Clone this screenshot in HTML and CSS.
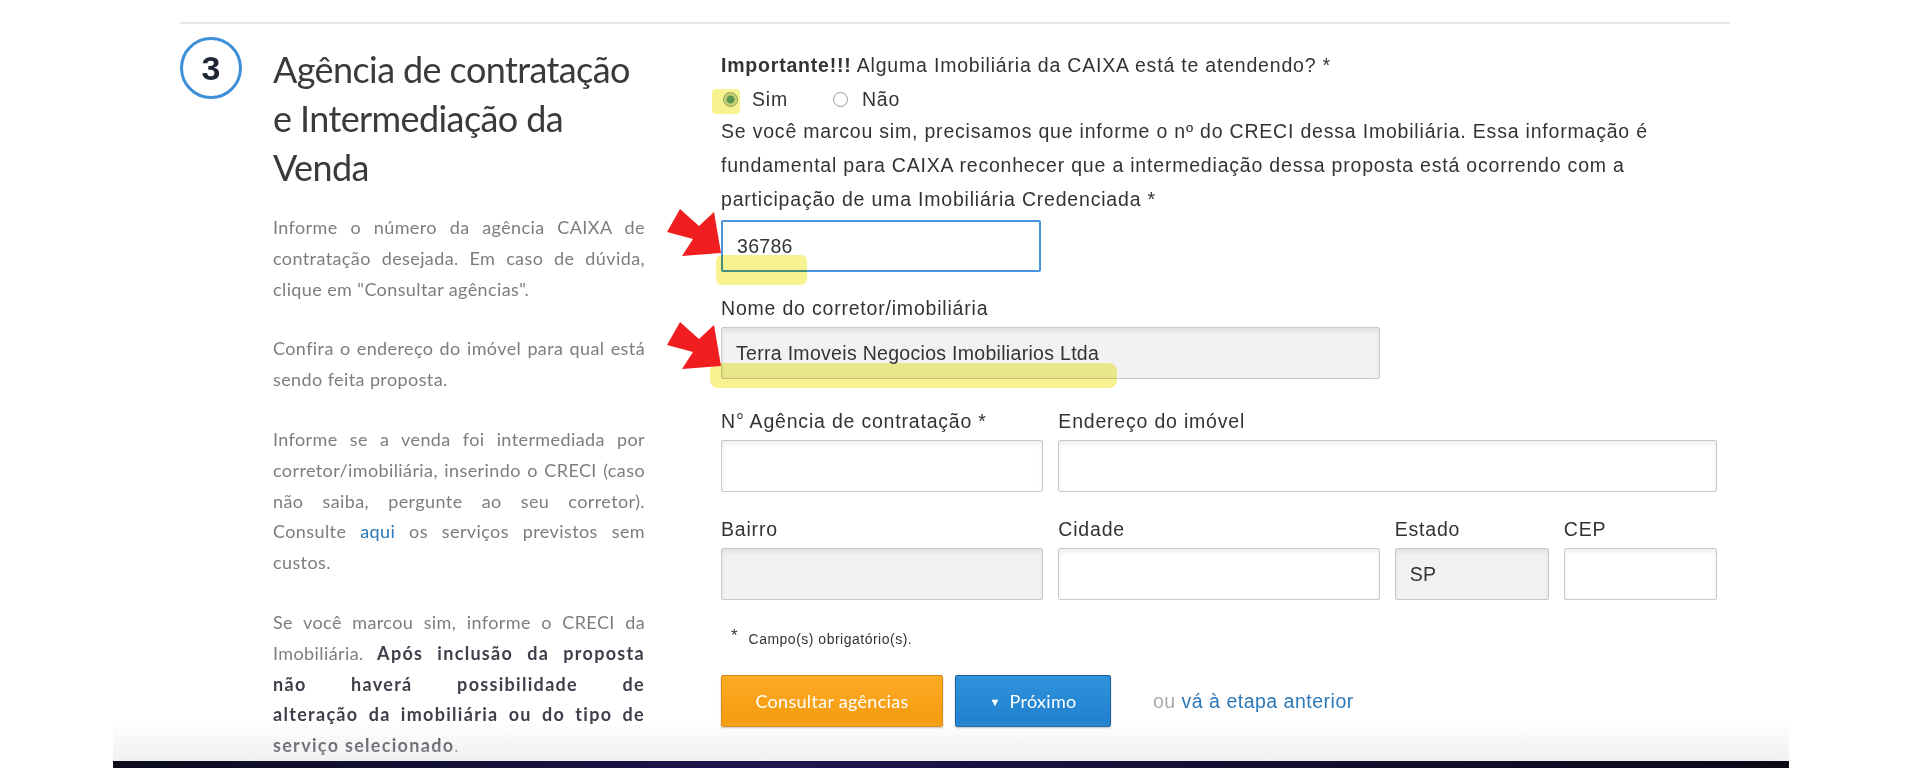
FILE: index.html
```html
<!DOCTYPE html>
<html lang="pt-BR">

<head>
    <meta charset="UTF-8">
    <meta name="viewport" content="width=device-width, initial-scale=1.0">
    <title>Agência de contratação e Intermediação da Venda</title>
    <link rel="stylesheet" href="styles.css">
</head>

<body>
    <div class="page">
        <section class="step">

            <div class="step-aside">
                <div class="step-head">
                    <span class="step-num">3</span>
                    <h2>Agência de contratação e Intermediação da Venda</h2>
                </div>
                <div class="step-help">
                    <p>Informe o número da agência CAIXA de contratação desejada. Em caso de dúvida, clique em "Consultar agências".</p>
                    <p>Confira o endereço do imóvel para qual está sendo feita proposta.</p>
                    <p>Informe se a venda foi intermediada por corretor/imobiliária, inserindo o CRECI (caso não saiba, pergunte ao seu corretor). Consulte <a href="#">aqui</a> os serviços previstos sem custos.</p>
                    <p>Se você marcou sim, informe o CRECI da Imobiliária. <b>Após inclusão da proposta <span class="jline">não haverá possibilidade de</span> alteração da imobiliária ou do tipo de serviço selecionado</b>.</p>
                </div>
            </div>

            <form class="step-form" onsubmit="event.preventDefault();">
                <p class="question"><b>Importante!!!</b> Alguma Imobiliária da CAIXA está te atendendo? *</p>
                <div class="radios">
                    <label><input type="radio" name="imob" checked> Sim</label>
                    <label><input type="radio" name="imob"> Não</label>
                </div>
                <p class="creci-info">Se você marcou sim, precisamos que informe o nº do CRECI dessa Imobiliária. Essa informação é fundamental para CAIXA reconhecer que a intermediação dessa proposta está ocorrendo com a participação de uma Imobiliária Credenciada *</p>

                <div class="fields">
                    <div class="field full">
                        <input class="creci" type="text" value="36786">
                    </div>

                    <div class="field full">
                        <label>Nome do corretor/imobiliária</label>
                        <input class="readonly nome" type="text" value="Terra Imoveis Negocios Imobiliarios Ltda" readonly>
                    </div>

                    <div class="field">
                        <label>N° Agência de contratação *</label>
                        <input type="text">
                    </div>
                    <div class="field wide">
                        <label>Endereço do imóvel</label>
                        <input type="text">
                    </div>

                    <div class="field">
                        <label>Bairro</label>
                        <input class="readonly" type="text" readonly>
                    </div>
                    <div class="field">
                        <label>Cidade</label>
                        <input type="text">
                    </div>
                    <div class="field">
                        <label>Estado</label>
                        <input class="readonly" type="text" value="SP" readonly>
                    </div>
                    <div class="field">
                        <label>CEP</label>
                        <input type="text">
                    </div>
                </div>

                <p class="required"><span>*</span> Campo(s) obrigatório(s).</p>

                <div class="actions">
                    <button type="button" class="btn btn-orange">Consultar agências</button>
                    <button type="submit" class="btn btn-blue"><span class="caret">▼</span> Próximo</button>
                    <span class="back">ou <a href="#">vá à etapa anterior</a></span>
                </div>
            </form>

        </section>
    </div>

    <!-- marcações feitas por cima da captura -->
    <svg class="marks" width="1920" height="768" viewBox="0 0 1920 768">
        <rect class="hl" x="712" y="89" width="28" height="25" rx="4"/>
        <rect class="hl" x="716" y="255" width="91" height="30" rx="6"/>
        <rect class="hl" x="710" y="363" width="407" height="25" rx="8"/>
        <polygon class="arrow" points="680,209 699,226 714,212 721,253 682,256 693,239 667,232"/>
        <polygon class="arrow" points="680,322 699,339 714,325 721,366 682,369 693,352 667,345"/>
    </svg>

    <div class="dock"></div>
</body>

</html>
```

FILE: styles.css
```css
body {
    margin: 0;
    padding-top: 22px;
    height: 746px;
    overflow: hidden;
    background: #fff;
    font-family: "Liberation Sans", Arial, sans-serif;
    color: #333;
}

.page {
    width: 1550px;
    margin-left: 180px;
    border-top: 2px solid #e6e6e6;
}

.step {
    display: flex;
}

/* coluna da esquerda */
.step-aside {
    width: 464px;
    flex: none;
}

.step-head {
    display: flex;
    align-items: flex-start;
    gap: 31px;
}

.step-num {
    flex: none;
    width: 56px;
    height: 56px;
    margin-top: 13px;
    border: 3px solid #3d8fd8;
    border-radius: 50%;
    display: flex;
    align-items: center;
    justify-content: center;
    font-family: "Liberation Sans", Arial, sans-serif;
    font-weight: bold;
    font-size: 34px;
    color: #1e2636;
}

.step-head h2 {
    margin: 21px 0 0;
    font-family: Lato, sans-serif;
    font-weight: 400;
    font-size: 36px;
    letter-spacing: -0.6px;
    line-height: 49px;
    color: #3a3a3a;
}

.step-help {
    margin: 20px 0 0 93px;
    width: 372px;
}

.step-help p {
    margin: 0 0 29px;
    font-family: Lato, sans-serif;
    font-size: 18px;
    letter-spacing: 0.4px;
    line-height: 30.8px;
    text-align: justify;
    color: #7d7d7d;
}

.step-help a {
    color: #2a78b8;
    text-decoration: none;
}

.step-help b {
    letter-spacing: 1.3px;
    color: #3d3f4a;
}

/* linha que o texto original deixa sozinha */
.step-help .jline {
    display: inline-block;
    width: 100%;
    text-align-last: justify;
}

/* formulário */
.step-form {
    width: 996px;
    margin-left: 77px;
    padding-top: 27px;
    font-size: 19.5px;
    letter-spacing: 0.8px;
}

.question {
    margin: 0;
    line-height: 28px;
}

.radios {
    display: flex;
    gap: 43px;
    margin-top: 6px;
    line-height: 28px;
}

.radios label {
    display: flex;
    align-items: center;
    gap: 14px;
}

.radios input {
    appearance: none;
    margin: 0 0 0 2px;
    width: 15px;
    height: 15px;
    border: 1px solid #9a9a9a;
    border-radius: 50%;
    background: #fff;
}

.radios input:checked {
    border-color: #8fa69b;
    background: radial-gradient(circle, #5f9c86 0, #5f9c86 3.5px, #c9d8d0 4.5px, #e4ebe7 100%);
}

.creci-info {
    width: 960px;
    margin: 1px 0 0;
    line-height: 34px;
}

.fields {
    display: grid;
    grid-template-columns: 322fr 321fr 154fr 153fr;
    column-gap: 15px;
    row-gap: 24px;
    margin-top: 4px;
}

.field {
    display: flex;
    flex-direction: column;
    align-items: flex-start;
    gap: 6px;
}

.field label {
    line-height: 26px;
}

.full {
    grid-column: 1 / -1;
}

.full + .full {
    margin: -1px 0 5px;
}

.wide {
    grid-column: 2 / 5;
}

.field input {
    box-sizing: border-box;
    width: 100%;
    height: 52px;
    padding: 0 14px;
    border: 1px solid #c9c9c9;
    border-radius: 2px;
    background: #fff;
    box-shadow: inset 0 3px 5px rgba(0, 0, 0, 0.07);
    font-family: "Liberation Sans", Arial, sans-serif;
    font-size: 19.5px;
    letter-spacing: 0.3px;
    color: #333;
}

.field input.readonly {
    background: #f2f2f2;
}

.field input.creci {
    width: 320px;
    border: 2px solid #4a94db;
    box-shadow: none;
}

.field input.nome {
    width: 659px;
}

.required {
    margin: 26px 0 0 10px;
    font-size: 14px;
    letter-spacing: 0.5px;
    color: #333;
}

.required span {
    font-size: 17px;
    margin-right: 6px;
    vertical-align: 3px;
}

.actions {
    display: flex;
    align-items: center;
    gap: 12px;
    margin-top: 28px;
}

.btn {
    height: 52px;
    border-radius: 2px;
    font-family: Lato, sans-serif;
    font-size: 18px;
    letter-spacing: 0.3px;
    color: #fff;
    cursor: pointer;
    box-shadow: 0 1px 2px rgba(0, 0, 0, 0.25);
}

.btn-orange {
    width: 222px;
    border: 1px solid #d98a12;
    background: linear-gradient(#fcaa25, #f49b0d);
}

.btn-blue {
    width: 156px;
    border: 1px solid #1b5f9e;
    background: linear-gradient(#3092dc, #1f7fcd);
}

.caret {
    font-size: 11px;
    vertical-align: 2px;
    margin-right: 4px;
}

.back {
    margin-left: 30px;
    letter-spacing: 0.5px;
    color: #a9a9a9;
}

.back a {
    color: #2a78b8;
    text-decoration: none;
}

/* marcações por cima */
.marks {
    position: absolute;
    top: 0;
    left: 0;
    pointer-events: none;
}

.hl {
    fill: #f4ef6c;
    opacity: 0.75;
    mix-blend-mode: multiply;
}

.arrow {
    fill: #f01e1e;
}

.dock {
    position: absolute;
    left: 113px;
    bottom: 0;
    width: 1676px;
    height: 48px;
    background:
        linear-gradient(to right, #0b0b1c, #1c1550 40%, #120f2e 70%, #0a0a18) bottom / 100% 7px no-repeat,
        linear-gradient(rgba(230, 230, 230, 0), rgba(225, 225, 225, 0.5)) top / 100% 41px no-repeat;
    pointer-events: none;
}
```
